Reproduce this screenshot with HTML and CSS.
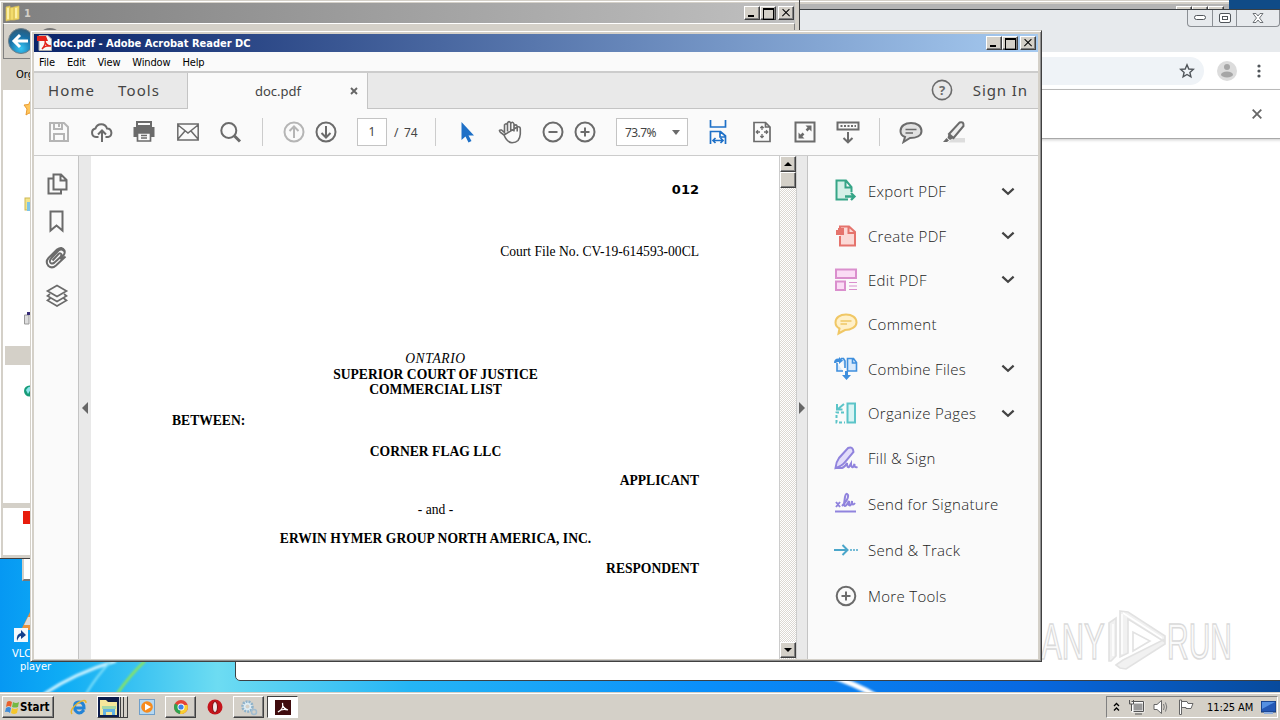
FILE: index.html
```html
<!DOCTYPE html>
<html lang="en">
<head>
  <meta charset="UTF-8"/>
  <title>doc.pdf - Adobe Acrobat Reader DC</title>
  <link rel="stylesheet" href="styles.css">
</head>
<body>
<div class="desktop">

  <!-- wallpaper -->
  <svg class="wallpaper" viewBox="0 0 1280 720">
    <defs>
      <linearGradient id="sky"><stop offset="0" stop-color="#0698f3"/><stop offset=".05" stop-color="#0fadf5"/><stop offset=".1" stop-color="#35c0f2"/><stop offset=".17" stop-color="#6ddcf2"/><stop offset=".32" stop-color="#25b5f5"/><stop offset=".55" stop-color="#0a8ffa"/><stop offset=".8" stop-color="#0869e2"/><stop offset="1" stop-color="#084a9c"/></linearGradient>
      <filter id="soft"><feGaussianBlur stdDeviation="0.8"/></filter>
    </defs>
    <rect width="1280" height="720" fill="url(#sky)"/>
    <rect x="1200" width="80" height="20" fill="#104b87"/>
    <g fill="none" filter="url(#soft)">
      <path d="M44 694Q75 673 116 661" stroke="#c9f2ff" stroke-width="3"/>
      <path d="M86 694Q96 677 111 661" stroke="#7fe0fa" stroke-width="2"/>
      <path d="M117 694Q130 675 145 661" stroke="#8be65d" stroke-width="2.5"/>
      <path d="M828 675Q856 684 876 696" stroke="#fff" stroke-width="5"/>
    </g>
  </svg>
  <div class="shortcut">
    <svg width="22" height="42" viewBox="0 0 22 42"><path d="M18 4L9 22H22V4Z" fill="#e8933f"/><path d="M16 9L12 17H20V9Z" fill="#ddd"/><rect x="2" y="20" width="14" height="14" fill="#f4f8fc"/><path d="M5 33Q4 26 9 25V22L14 27 9 31V28Q7 28 5 33Z" fill="#123f8c"/></svg>
    <span>VLC media</span>
    <span>player</span>
  </div>

  <!-- windows behind -->
  <div class="back-window"><i class="cap"></i><i class="cap"></i><i class="cap"></i></div>
  <div class="stub-window"></div>

  <div class="chrome">
    <div class="chrome-top">
      <div class="chrome-caps">
        <span><svg width="12" height="6"><rect x=".5" y=".5" width="11" height="4" rx="2" fill="#fff" stroke="#50555a"/></svg></span>
        <span><svg width="12" height="11"><rect x=".5" y=".5" width="11" height="9" rx="1.5" fill="#fff" stroke="#50555a"/><rect x="3.5" y="3.5" width="5" height="3" fill="#fff" stroke="#50555a"/></svg></span>
        <span><svg width="12" height="11"><path d="M1 .5H4L6 3 8 .5H11L7.5 5 11 9.500H8L6 7 4 9.500H1L4.500 5Z" fill="#fff" stroke="#50555a" stroke-width=".8"/></svg></span>
      </div>
    </div>
    <div class="chrome-bar">
      <div class="omnibox"><svg width="16" height="16" viewBox="0 0 16 16"><path d="M8 1.800L9.800 6 14.300 6.400 10.900 9.400 11.900 13.800 8 11.500 4.100 13.800 5.100 9.400 1.700 6.400 6.200 6Z" fill="none" stroke="#50555a" stroke-width="1.400"/></svg></div>
      <svg class="avatar" width="20" height="20" viewBox="0 0 20 20"><circle cx="10" cy="10" r="10" fill="#dcdcdc"/><circle cx="10" cy="6" r="3" fill="#a6a6a6"/><ellipse cx="10" cy="13.500" rx="6" ry="3" fill="#a6a6a6"/></svg>
      <svg width="4" height="14"><circle cx="2" cy="2" r="1.600" fill="#50555a"/><circle cx="2" cy="7" r="1.600" fill="#50555a"/><circle cx="2" cy="12" r="1.600" fill="#50555a"/></svg>
    </div>
    <div class="infobar"><svg width="10" height="10"><path d="M.7.7L9.300 9.300M9.300.7L.7 9.300" stroke="#666" stroke-width="1.800"/></svg></div>
  </div>

  <div class="explorer">
    <div class="explorer-title">
      <svg width="16" height="17"><path d="M1 2L5 1V15L1 16ZM5 3L9 2V15H5ZM9 2L14 1V14L9 15Z" fill="#f2dc6c" stroke="#d9bd55" stroke-width=".7"/><path d="M3 3V14M11 3V13" stroke="#fff5b8" stroke-width="1.500"/></svg>
      <span>1</span>
      <div class="caps"><i class="cap min"></i><i class="cap max"></i><i class="cap close"></i></div>
    </div>
    <div class="explorer-nav">
      <svg width="60" height="32" viewBox="0 0 60 32"><defs><radialGradient id="orb" cx=".5" cy=".8" r=".8"><stop offset="0" stop-color="#36c6f5"/><stop offset=".6" stop-color="#176ea5"/><stop offset="1" stop-color="#305c78"/></radialGradient></defs><circle cx="46" cy="17" r="13" fill="#777"/><circle cx="17" cy="17" r="12.500" fill="url(#orb)" stroke="#6d7f8a"/><path d="M24 17H11M16 11L10 17 16 23" fill="none" stroke="#fff" stroke-width="3"/></svg>
    </div>
    <div class="explorer-tools">Organize</div>
    <div class="explorer-pane">
      <svg width="30" height="415" viewBox="0 0 30 415">
        <path d="M21 15L25.500 14.500 28 10 30 24 26 23 23 25 24 19Z" fill="#ffc65c" stroke="#e99a2f"/>
        <rect x="22" y="108" width="12" height="12" fill="#f3e48a" stroke="#cdb754"/><rect x="24" y="112" width="9" height="9" fill="#7fc5e6"/>
        <path d="M21.500 225H26V234H21.500Z" fill="#ddd" stroke="#999"/><path d="M24 222H30V229H27V225H24Z" fill="#362d77"/>
        <rect x="2" y="256" width="28" height="19" fill="#d4d0c8"/>
        <circle cx="26.500" cy="301" r="5.500" fill="#179c78"/><path d="M23 300Q27 294 28 299L25 304Z" fill="#8ee5ec"/>
      </svg>
    </div>
    <div class="explorer-details"><i></i></div>
  </div>

  <!-- watermark -->
  <svg class="watermark" width="230" height="70" viewBox="0 0 230 70">
    <g fill="#fafafa" stroke="#dadada" stroke-width="1.600">
      <text transform="translate(1 51) scale(.62 1)" font-size="50">ANY</text>
      <text transform="translate(127 51) scale(.6 1)" font-size="50">RUN</text>
      <path d="M69 15L76 10V48L71 53H69ZM80 3L88 4 125 28V34L88 11V45L80 49ZM76 57L83 52 125 31V36L86 61 80 60Z" fill="#f1f1f1" stroke="#e2e2e2"/>
      <path d="M93 24V43L110 33Z" fill="#fff" stroke="#e2e2e2"/>
    </g>
    <path d="M83 5L122 30M82 6V46M73 16V48" fill="none" stroke="#fff" stroke-width="1.500"/>
  </svg>

  <!-- Acrobat Reader -->
  <div class="reader">
    <div class="titlebar">
      <svg width="15" height="16" viewBox="0 0 15 16"><path d="M2 .5H11L14.500 4V15.500H2Z" fill="#f7f7f7" stroke="#aaa"/><path d="M0 1H9L11 6H0Z" fill="#e32219"/><path d="M5 14Q9 9 8 6Q9 11 14 11Q8 10 5 14Z" fill="none" stroke="#e32219" stroke-width="1.300"/></svg>
      <span>doc.pdf - Adobe Acrobat Reader DC</span>
      <div class="caps"><i class="cap min"></i><i class="cap max"></i><i class="cap close"></i></div>
    </div>
    <div class="menubar"><span>File</span><span>Edit</span><span>View</span><span>Window</span><span>Help</span></div>

    <div class="tabs">
      <div class="tabs-left"><span>Home</span><span>Tools</span></div>
      <div class="tab-doc"><span>doc.pdf</span><svg width="8" height="8"><path d="M1 1L7 7M7 1L1 7" stroke="#666" stroke-width="1.900"/></svg></div>
      <div class="tabs-right">
        <svg width="22" height="22" viewBox="0 0 22 22"><circle cx="11" cy="11" r="9.600" fill="none" stroke="#6b6b6b" stroke-width="1.600"/><text x="11" y="15.500" text-anchor="middle">?</text></svg>
        <span>Sign In</span>
      </div>
    </div>

    <div class="toolbar">
      <svg class="icon dim" viewBox="0 0 24 24"><path d="M3 3H17L21 7V21H3ZM7 3V9H15V3M12 4V7M7 21V14H17V21"/></svg>
      <svg class="icon" viewBox="0 0 24 24"><path d="M8.500 17H6A4.300 4.300 0 0 1 5.500 8.500 6 6 0 0 1 17 8.500 4.300 4.300 0 0 1 18 17H15.500M12 22V11M8 14.500L12 10.500 16 14.500"/></svg>
      <svg class="icon" viewBox="0 0 24 24"><path d="M4 6V2H18V6Z" fill="#fafafa"/><path d="M.500 7H21.500V17H18V13H4V17H.500Z" fill="#6b6b6b" stroke="none"/><path d="M4.500 13H17.500V21H4.500ZM8 15.500H14M8 18H14" stroke-width="1.700"/></svg>
      <svg class="icon" viewBox="0 0 24 24"><path d="M1.800 4H22.200V20H1.800ZM2 5L12 13 22 5M2 19L9 11M22 19L15 11" stroke-width="1.500"/></svg>
      <svg class="icon" viewBox="0 0 24 24"><circle cx="9.800" cy="10.500" r="7.500"/><path d="M15.500 16L21 21.500" stroke-width="3"/></svg>
      <i class="sep"></i>
      <div class="pair">
        <svg class="icon dim" viewBox="0 0 24 24"><circle cx="12" cy="12" r="9.500"/><path d="M12 18V7M7.500 11L12 6.500 16.500 11"/></svg>
        <svg class="icon" viewBox="0 0 24 24"><circle cx="12" cy="12" r="9.500"/><path d="M12 6V17M7.500 13L12 17.500 16.500 13"/></svg>
      </div>
      <div class="pages"><b>1</b><span>/&nbsp; 74</span></div>
      <i class="sep"></i>
      <svg class="icon" viewBox="0 0 24 24"><path d="M6.500 2V20L10.500 16.500 13.500 22.500 16.500 21 13.500 15.500H19Z" fill="#1e70c7" stroke="none"/></svg>
      <svg class="icon" viewBox="0 0 24 24"><path stroke-width="1.600" d="M6 15L2.500 12.500Q0 9.500 3.500 10L6.500 12.500V5Q8 2.500 9.500 5V11.500M9.500 5V3Q11 .2 12.700 3V11.500M12.700 3.500Q14.500 .7 16 4V11.500M16 6Q18.500 3.500 19.200 6.500V11.500M19.200 7Q22.500 6 22.300 9.500V14Q22 18 20 20.500 18 22.500 14 22.700 9 22.500 6 15Z"/></svg>
      <div class="pair">
        <svg class="icon" viewBox="0 0 24 24"><circle cx="12" cy="12" r="9.500"/><path d="M7.500 12H16.500"/></svg>
        <svg class="icon" viewBox="0 0 24 24"><circle cx="12" cy="12" r="9.500"/><path d="M7.500 12H16.500M12 7.500V16.500"/></svg>
      </div>
      <div class="zoom"><span>73.7%</span><i></i></div>
      <svg class="icon blue" viewBox="0 0 24 24"><path d="M3.500 0V7H18.500V0M3.500 24V11.500H13.500L18.500 16V24M13 12V17H18M6 20.500H16M8.500 18L6 20.500 8.500 23M13.500 18L16 20.500 13.500 23" stroke-width="1.700"/></svg>
      <svg class="icon" viewBox="0 0 24 24"><path d="M4 2.500H15.500L20 7V21.500H4ZM15.500 3V7H20" stroke-width="1.700"/><path d="M12 6.500V10M12 14V17.500M6.500 12H10M14 12H17.500M10.300 8L12 6.300 13.700 8M10.300 16L12 17.700 13.700 16M8 10.300L6.300 12 8 13.700M16 10.300L17.700 12 16 13.700" stroke-width="1.300"/></svg>
      <svg class="icon" viewBox="0 0 24 24"><rect x="2.500" y="2.500" width="19" height="19"/><path d="M13.500 10.500L17 7M10.500 13.500L7 17" stroke-width="2.500"/><path d="M12.500 5.500H18.500V11.500ZM5.500 12.500V18.500H11.500Z" fill="#6b6b6b" stroke="none"/></svg>
      <svg class="icon" viewBox="0 0 24 24"><rect x="1.500" y="2.500" width="21" height="7"/><path d="M4.500 6H20" stroke-dasharray="2 1.500"/><path d="M12 12V22M7.500 18L12 22.300 16.500 18"/></svg>
      <i class="sep"></i>
      <svg class="icon" viewBox="0 0 24 24"><path d="M12 3C18 3 22.500 6 22.500 11 22.500 16 17 18 11 18L4.500 22 6 17C3 16 1.500 14 1.500 11 1.500 6 6 3 12 3Z" fill="#e2e2e2"/><path d="M6.500 9.500H17.500M6.500 13H14" stroke-width="1.500"/></svg>
      <svg class="icon" viewBox="0 0 24 24"><path d="M11 18H23V22.500H6Z" fill="#ddd" stroke="none"/><path d="M7 14L17.500 2.500Q22 1 21.500 6L11.500 18Z" fill="#eee"/><path d="M6.500 14L11.500 18 8 20 5.500 18ZM4.500 18L7 20.500 5 22H1Z" fill="#6b6b6b" stroke="none"/></svg>
    </div>

    <div class="workspace">
      <div class="rail">
        <svg class="icon" viewBox="0 0 24 24"><path d="M8.500 2.500H16L21.500 8V17.500H8.500ZM15.500 3V8.500H21M8 6.500H3.500V21.500H16V18"/></svg>
        <svg class="icon" viewBox="0 0 24 24"><path d="M5.500 2.500H17.500V21.500L11.500 16.500 5.500 21.500Z"/></svg>
        <svg class="icon" viewBox="0 0 24 24"><path d="M7.500 14.500L13.500 8Q15.500 6.500 16.500 8.500 16.500 10 15 11.500L9 17Q6 18.500 5 16 4.500 14 6.500 12L13.500 4.500Q16.500 2 19 5M20.500 10.500L11 19.500Q7 23 3.500 20 0 16 3.500 12L12 3.500Q17 0 19.500 4.500 20.500 7.500 17.500 10.500L15 13"/></svg>
        <svg class="icon" viewBox="0 0 24 24"><path d="M12 1.500L21.500 7 12 12.500 2.500 7ZM5 10L2.500 12 12 17.500 21.500 12 19 10M5 14.500L2.500 16.500 12 22 21.500 16.500 19 14.500" stroke-width="1.700"/></svg>
      </div>
      <div class="collapse left"><i></i></div>
      <div class="page">
        <p class="stamp">012</p>
        <p class="file-no">Court File No. CV-19-614593-00CL</p>
        <p class="court"><em>ONTARIO</em><br>SUPERIOR COURT OF JUSTICE<br>COMMERCIAL LIST</p>
        <p class="between">BETWEEN:</p>
        <p class="party">CORNER FLAG LLC</p>
        <p class="role">APPLICANT</p>
        <p class="and">- and -</p>
        <p class="party">ERWIN HYMER GROUP NORTH AMERICA, INC.</p>
        <p class="role">RESPONDENT</p>
      </div>
      <div class="scrollbar"><i class="btn up"></i><i class="btn thumb"></i><i class="btn down"></i></div>
      <div class="collapse right"><i></i></div>

      <div class="panel">
        <div class="tool export">
          <svg class="icon" viewBox="0 0 24 24"><path d="M14 20.500H2.500V1.500H12L17.500 8V13M11.500 2V8.500H17" fill="#d5f0e7"/><path d="M11 17.500H20M17 14L20.500 17.500 17 21" stroke-width="2.300"/></svg>
          <span>Export PDF</span><svg class="chev" viewBox="0 0 12 8"><path d="M1 1.500L6 6 11 1.500"/></svg>
        </div>
        <div class="tool create">
          <svg class="icon" viewBox="0 0 24 24"><path d="M6 12V21.500H21V8L15 2.500H6V5M14.500 3V9H20" fill="#fbd9d6"/><path d="M2 6H4V4H10V11H2Z" fill="#e5736c" stroke="none"/></svg>
          <span>Create PDF</span><svg class="chev" viewBox="0 0 12 8"><path d="M1 1.500L6 6 11 1.500"/></svg>
        </div>
        <div class="tool edit">
          <svg class="icon" viewBox="0 0 24 24"><path d="M2 1.500H22V10H2ZM2 13.500H11V22H2Z" fill="#fbdcf5"/><path d="M15 14.500H23M15 18H23M15 21.500H23" stroke-width="1.200"/></svg>
          <span>Edit PDF</span><svg class="chev" viewBox="0 0 12 8"><path d="M1 1.500L6 6 11 1.500"/></svg>
        </div>
        <div class="tool comment">
          <svg class="icon" viewBox="0 0 24 24"><path d="M12 2.500C18 2.500 22.500 5.500 22.500 10.500 22.500 15 17 18 11 18L4.500 21.500 5.500 16.500C2.500 15 1.500 13 1.500 10.500 1.500 5.500 6 2.500 12 2.500Z" fill="#fff0c8"/><path d="M6.500 9H17.500M6.500 12H13" stroke-width="1.300"/></svg>
          <span>Comment</span>
        </div>
        <div class="tool combine">
          <svg class="icon" viewBox="0 0 24 24"><path d="M9 14H3V6M7 1.500H9.500L11 4V11M14 14H22.500V5.500L19.500 1.500H13.500V14M18.500 2V6H22" fill="#d8eafc"/><path d="M0 6Q0 1 5 1.500V0L9 3.500 5 7V5Q3 4.500 2 6Z" fill="#3f8fdd" stroke="none"/><path d="M11 14H14V18H17L12.500 23 8 18H11Z" fill="#3f8fdd" stroke="none"/></svg>
          <span>Combine Files</span><svg class="chev" viewBox="0 0 12 8"><path d="M1 1.500L6 6 11 1.500"/></svg>
        </div>
        <div class="tool organize">
          <svg class="icon" viewBox="0 0 24 24"><path d="M13.500 2.500H21V21.500H13.500Z" fill="#d9f4f4"/><path d="M10 11.500H2.500V21.500H11" stroke-dasharray="3 2"/><path d="M10 3L4 8M3 3V8.500H8.500"/></svg>
          <span>Organize Pages</span><svg class="chev" viewBox="0 0 12 8"><path d="M1 1.500L6 6 11 1.500"/></svg>
        </div>
        <div class="tool sign tall">
          <svg class="icon" viewBox="0 0 24 24"><path d="M1.500 22Q2 16 5 12L14 2Q19 0 19.500 6L11 16Q8 20 1.500 22Z" fill="#e2dcfa"/><path d="M1.500 22H8Q11 21 13 17Q13 22 15 21L17 17.500Q17 22 19 21L20.500 18Q20 22 23.500 21"/></svg>
          <span>Fill &amp; Sign</span>
        </div>
        <div class="tool sign tall">
          <svg class="icon" viewBox="0 0 24 24"><path d="M2 10L6 15M6 10L2 15M1 19.500H22M8 14Q15 7 14 3 12 0 11 5L10 12Q11 17 15 9L15 13Q17 15 18 9Q18 15 21 11"/></svg>
          <span>Send for Signature</span>
        </div>
        <div class="tool track tall">
          <svg class="icon" viewBox="0 0 24 24"><path d="M0 12H13M8.500 7L13.500 12 8.500 17"/><path d="M16 12H24" stroke-dasharray="2 1" stroke-width="1.300"/></svg>
          <span>Send &amp; Track</span>
        </div>
        <div class="tool tall">
          <svg class="icon" viewBox="0 0 24 24"><circle cx="12" cy="12" r="9.300"/><path d="M7.500 12H16.500M12 7.500V16.500"/></svg>
          <span>More Tools</span>
        </div>
      </div>
    </div>
  </div>

  <div class="taskbar">
    <div class="start">
      <svg width="15" height="15" viewBox="0 0 15 15"><path d="M2 2Q4 0 7 2L6 7Q4 5 1 7Z" fill="#e9602b"/><path d="M8 2Q11 4 14 2L13 7Q10 8 7 7Z" fill="#74b843"/><path d="M1 8Q4 6 6 8L5 13Q3 11 0 12Z" fill="#3e8bd8"/><path d="M7 8Q10 10 13 8L12 13Q9 15 6 13Z" fill="#f5c62c"/></svg>
      <span>Start</span>
    </div>
    <div class="apps">
      <div class="app"><svg width="18" height="18" viewBox="0 0 18 18"><path d="M14 12Q9 18 5 12 3 4 9 4 14 4 14 10H6" fill="none" stroke="#2383d6" stroke-width="3"/><path d="M2 16Q-1 12 8 5 16 0 16 5" fill="none" stroke="#e9b52c" stroke-width="1.500"/></svg></div>
      <div class="app dark"><svg width="18" height="18" viewBox="0 0 18 18"><path d="M0 2H6L8 4H17V17H0Z" fill="#f5e79b"/><path d="M2 8H16V11H2Z" fill="#a7d8a6"/><path d="M3 17V11H15V17H12V14H6V17Z" fill="#62b2e4"/></svg></div>
      <div class="app"><svg width="16" height="16"><rect x=".5" y=".5" width="15" height="15" fill="#b5d8f2" stroke="#6f9fca"/><circle cx="8" cy="8" r="5.800" fill="#f68b1e"/><path d="M6 4.500L12 8 6 11.500Z" fill="#fff"/></svg></div>
      <div class="app raised"><svg width="16" height="16" viewBox="0 0 16 16"><circle cx="8" cy="8" r="7" fill="#e44436"/><path d="M8 8L2 4.500A7 7 0 0 0 7 15Z" fill="#2ea44f"/><path d="M8 8L7 15A7 7 0 0 0 14.500 6H8Z" fill="#f8cf30"/><circle cx="8" cy="8" r="3.500" fill="#fff"/><circle cx="8" cy="8" r="2.600" fill="#3e83e8"/></svg></div>
      <div class="app"><svg width="16" height="16"><circle cx="8" cy="8" r="7.500" fill="#c5141b"/><ellipse cx="8" cy="8" rx="2.500" ry="5.500" fill="#f1e8e8" stroke="#7e0f13"/></svg></div>
      <div class="app raised"><svg width="18" height="17" viewBox="0 0 18 17"><circle cx="7.500" cy="7.500" r="5" fill="#dcecf5" stroke="#8fb2ca" stroke-width="2.500" stroke-dasharray="2 1"/><circle cx="7.500" cy="7.500" r="2" fill="#d4d0c8"/><circle cx="14" cy="13" r="2.500" fill="none" stroke="#a2bdd0" stroke-width="1.500"/></svg></div>
      <div class="app active"><svg width="16" height="15"><rect width="16" height="15" fill="#3f0b0d"/><path d="M3 12Q9 9 7.500 3Q7 8 13 10Q7 8 3 12Z" fill="none" stroke="#fff" stroke-width="1.200"/></svg></div>
    </div>
    <div class="tray">
      <svg width="7" height="10"><path d="M1 4L3.500 1.500 6 4M1 8.500L3.500 6 6 8.500" fill="none" stroke="#000" stroke-width="1.300"/></svg>
      <svg class="net" width="17" height="16" viewBox="0 0 17 16"><path d="M4.500 3.500H15.500V12.500H4.500Z" fill="#999" stroke="#fff" stroke-width="2"/><path d="M3.500 2.500H15.500V12.500H5.500M7 15H14M1.500 1V5H5.500V1M3.500 5V12" fill="none" stroke="#555"/></svg>
      <svg width="17" height="16" viewBox="0 0 17 16"><path d="M1 5.500H4L8.500 1.500V14.500L4 10.500H1Z" fill="#fff" stroke="#666"/><path d="M10.500 5Q12 8 10.500 11M12.500 3.500Q15 8 12.500 12.500" fill="none" stroke="#777"/></svg>
      <svg width="17" height="16" viewBox="0 0 17 16"><path d="M1.500 1H3.500V15.500H1.500ZM3.500 2.500H9L10 4.500H15L13 9.500H8V8.500H3.500Z" fill="#fff" stroke="#666"/></svg>
      <span>11:25 AM</span>
      <svg width="15" height="13"><rect width="15" height="11" fill="#2458b5" stroke="#123672"/><path d="M1 1H14L1 8Z" fill="#5590e2"/><rect x="3" y="11" width="9" height="2" fill="#8cadde"/></svg>
    </div>
  </div>
</div>
</body>
</html>
```
FILE: styles.css
```css
* {
  margin: 0;
  padding: 0;
  box-sizing: border-box;
}

body {
  width: 1280px;
  height: 720px;
  overflow: hidden;
  font-family: "DejaVu Sans Condensed", "DejaVu Sans", sans-serif;
  font-size: 11px;
}

svg {
  display: block;
  flex-shrink: 0;
}

.desktop {
  position: relative;
  width: 1280px;
  height: 720px;
  overflow: hidden;
}

.wallpaper {
  position: absolute;
  inset: 0;
}

.shortcut {
  position: absolute;
  left: 12px;
  top: 608px;
  width: 60px;
  color: #fff;
  line-height: 13px;
}

.shortcut svg {
  margin-bottom: -3px;
}

.shortcut span {
  display: block;
  white-space: nowrap;
}

.shortcut span:last-child {
  padding-left: 8px;
}

/* classic caption buttons */
.caps {
  display: flex;
  margin-left: auto;
}

.cap {
  position: relative;
  width: 16px;
  height: 14px;
  background: #d4d0c8;
  border: 1px solid;
  border-color: #fff #404040 #404040 #fff;
  box-shadow: inset -1px -1px #808080;
}

.cap.close {
  margin-left: 2px;
}

.cap.min::after {
  content: "";
  position: absolute;
  left: 3px;
  bottom: 2px;
  width: 6px;
  height: 2px;
  background: #000;
}

.cap.max::after {
  content: "";
  position: absolute;
  left: 2px;
  top: 1px;
  width: 9px;
  height: 9px;
  border: 1px solid #000;
  border-top-width: 2px;
}

.cap.close::before,
.cap.close::after {
  content: "";
  position: absolute;
  left: 2px;
  top: 5px;
  width: 10px;
  height: 1.4px;
  background: #000;
  transform: rotate(45deg);
}

.cap.close::after {
  transform: rotate(-45deg);
}

/* windows behind */
.back-window {
  position: absolute;
  left: 780px;
  top: 0;
  width: 449px;
  height: 10px;
  display: flex;
  justify-content: flex-end;
  padding: 6px 5px 0;
  background: linear-gradient(#d4d0c8 0 1px, #fff 1px 2px, #d4d0c8 2px 4px, #b4b4b4 4px);
}

.stub-window {
  position: absolute;
  left: 22px;
  top: 540px;
  width: 40px;
  height: 41px;
  background: #fff;
  border: 2px solid #d4d0c8;
  border-bottom-color: #777;
}

.chrome {
  position: absolute;
  left: 235px;
  top: 9px;
  width: 1060px;
  height: 672px;
  background: #fff;
  border: 1px solid #3c4043;
  border-radius: 0 0 5px 5px;
}

.chrome-top {
  height: 42px;
  padding-right: 14px;
  background: #e7eaed;
  display: flex;
  justify-content: flex-end;
}

.chrome-caps {
  display: flex;
  width: 93px;
  height: 17px;
  border: 1px solid #8b8f94;
  border-top: 0;
  border-radius: 0 0 4px 4px;
}

.chrome-caps span {
  display: flex;
  align-items: center;
  justify-content: center;
  width: 25px;
  border-right: 1px solid #8b8f94;
}

.chrome-caps span:last-child {
  width: 42px;
  border: 0;
}

.chrome-bar {
  display: flex;
  align-items: center;
  height: 38px;
  padding-left: 80px;
  border-bottom: 1px solid #b5b5b5;
}

.omnibox {
  display: flex;
  align-items: center;
  justify-content: flex-end;
  width: 888px;
  height: 28px;
  padding-right: 9px;
  border-radius: 14px;
  background: #eff3f7;
}

.avatar {
  margin: 0 20px 0 13px;
}

.infobar {
  height: 49px;
  display: flex;
  align-items: center;
  justify-content: flex-end;
  padding-right: 32px;
  border-bottom: 1px solid #a8a8a8;
  box-shadow: 0 1px 3px #ccc;
}

/* explorer */
.explorer {
  position: absolute;
  left: 0;
  top: 0;
  width: 800px;
  height: 559px;
  padding: 3px 4px 3px 3px;
  background: #d4d0c8;
  border-right: 1px solid #404040;
  border-bottom: 1px solid #404040;
  box-shadow: inset 0 1px #d4d0c8, inset 1px 2px #fff;
}

.explorer-title {
  display: flex;
  align-items: center;
  height: 20px;
  padding: 0 1px 0 2px;
  background: linear-gradient(90deg, #808080, #c0c0c0);
  color: #d4d0c8;
  font-weight: bold;
}

.explorer-title span {
  margin-left: 3px;
}

.explorer-nav {
  height: 36px;
  border: 1px solid #808080;
  border-top-color: #fff;
}

.explorer-tools {
  height: 31px;
  padding: 9px 0 0 13px;
  background: #d4d0c8;
}

.explorer-pane {
  height: 413px;
  background: #fff;
  overflow: hidden;
}

.explorer-details {
  height: 52px;
  padding: 3px 0 0 20px;
  border-top: 5px solid #d4d0c8;
  background: #fff;
}

.explorer-details i {
  display: block;
  width: 12px;
  height: 13px;
  background: #e81c0c;
}

.watermark {
  position: absolute;
  left: 1040px;
  top: 608px;
  font-family: "Liberation Sans", sans-serif;
}

/* reader window */
.reader {
  position: absolute;
  left: 30px;
  top: 30px;
  width: 1012px;
  height: 632px;
  padding: 3px 3px 2px;
  display: flex;
  flex-direction: column;
  background: #d4d0c8;
  border: 1px solid;
  border-color: #d4d0c8 #404040 #404040 #d4d0c8;
  box-shadow: inset 1px 1px #fff, inset -1px -1px #909090;
}

.titlebar {
  display: flex;
  align-items: center;
  height: 18px;
  padding: 0 2px 0 3px;
  background: linear-gradient(90deg, #0a246a, #a6caf0);
  color: #fff;
  font-weight: bold;
}

.titlebar span {
  margin-left: 1px;
}

.menubar {
  display: flex;
  align-items: center;
  gap: 12px;
  height: 19px;
  padding: 1px 0 0 5px;
  background: #fafafa;
  letter-spacing: -.15px;
}

.tabs {
  display: flex;
  height: 38px;
  border-top: 2px solid #ccc;
  background: #e9e9e9;
  font-family: "Noto Sans", sans-serif;
  font-size: 15px;
  color: #444;
}

.tabs-left {
  display: flex;
  align-items: center;
  gap: 23px;
  width: 154px;
  padding: 0 0 2px 14px;
  border-right: 1px solid #c4c4c4;
  border-bottom: 1px solid #c4c4c4;
  letter-spacing: 1.1px;
}

.tab-doc {
  display: flex;
  align-items: center;
  width: 179px;
  padding-left: 67px;
  background: #fafafa;
  font-size: 13px;
}

.tab-doc svg {
  margin: 0 9px 0 auto;
}

.tabs-right {
  flex: 1;
  display: flex;
  align-items: center;
  justify-content: flex-end;
  gap: 20px;
  padding: 0 10px 1px 0;
  border-left: 1px solid #c4c4c4;
  border-bottom: 1px solid #c4c4c4;
  letter-spacing: .9px;
}

.tabs-right text {
  font-size: 13px;
  font-weight: bold;
  letter-spacing: 0;
  fill: #6b6b6b;
}

.icon {
  width: 24px;
  height: 24px;
  fill: none;
  stroke: #6b6b6b;
  stroke-width: 2;
}

.icon.dim {
  stroke: #b5b5b5;
}

.icon.blue {
  stroke: #1e70c7;
}

.toolbar {
  display: flex;
  align-items: center;
  gap: 19px;
  height: 47px;
  padding-left: 13px;
  background: #fafafa;
  border-bottom: 1px solid #ccc;
  font-family: "Noto Sans", sans-serif;
  font-size: 12px;
  color: #444;
}

.sep {
  width: 1px;
  height: 28px;
  background: #ccc;
}

.pair {
  display: flex;
  gap: 8px;
}

.pages {
  display: flex;
  align-items: center;
  gap: 7px;
  width: 59px;
}

.pages b {
  width: 30px;
  height: 28px;
  border: 1px solid #c4c4c4;
  background: #fff;
  font-weight: normal;
  line-height: 26px;
  text-align: center;
  flex-shrink: 0;
}

.pages span {
  white-space: nowrap;
  letter-spacing: -.2px;
}

.zoom {
  display: flex;
  align-items: center;
  justify-content: space-between;
  width: 72px;
  height: 28px;
  padding: 0 7px 0 8px;
  border: 1px solid #c4c4c4;
  background: #fff;
  letter-spacing: -.6px;
}

.zoom i {
  border: 4px solid transparent;
  border-top: 5px solid #6b6b6b;
  border-bottom: 0;
}

.workspace {
  flex: 1;
  display: flex;
  min-height: 0;
}

.rail {
  width: 45px;
  padding: 16px 0 0 11px;
  background: #fafafa;
  border-right: 1px solid #c4c4c4;
}

.rail .icon {
  margin-bottom: 13px;
}

.rail .icon:nth-child(3) {
  margin-bottom: 14px;
}

.collapse {
  display: flex;
  align-items: center;
  justify-content: center;
  width: 12px;
  background: #e9e9e9;
}

.collapse i {
  border: 6px solid transparent;
}

.collapse.left i {
  border-right: 6px solid #666;
  border-left: 0;
}

.collapse.right {
  width: 11px;
  border-right: 1px solid #c4c4c4;
}

.collapse.right i {
  border-left: 6px solid #666;
  border-right: 0;
}

.page {
  width: 688px;
  padding: 26px 80px 0 81px;
  background: #fff;
  color: #000;
  font-family: "Liberation Serif", serif;
  font-size: 13.6px;
  line-height: 16px;
}

.page p {
  white-space: nowrap;
}

.page .stamp {
  font-family: "DejaVu Sans", sans-serif;
  font-size: 13px;
  font-weight: bold;
  text-align: right;
}

.file-no {
  margin-top: 46px;
  text-align: right;
}

.court {
  margin-top: 91px;
  font-weight: bold;
  text-align: center;
  line-height: 15.7px;
}

.court em {
  font-weight: normal;
  letter-spacing: .6px;
}

.between {
  margin-top: 15px;
  font-weight: bold;
}

.party {
  margin-top: 15px;
  font-weight: bold;
  text-align: center;
}

.role {
  margin-top: 13px;
  font-weight: bold;
  text-align: right;
}

.and {
  margin-top: 13px;
  text-align: center;
}

.and + .party {
  margin-top: 13px;
}

.and + .party + .role {
  margin-top: 14px;
}

.scrollbar {
  display: flex;
  flex-direction: column;
  width: 18px;
  padding: 0 1px 1px;
  border: 1px solid #ccc;
  border-width: 0 1px;
  background: repeating-conic-gradient(#dcd8d2 0 25%, #fff 0 50%) 0 0 / 2px 2px;
}

.btn {
  display: flex;
  align-items: center;
  justify-content: center;
  width: 16px;
  height: 16px;
  margin-left: -1px;
  background: #d4d0c8;
  border: 1px solid;
  border-color: #fff #404040 #404040 #fff;
  box-shadow: inset -1px -1px #808080;
}

.btn.up::after,
.btn.down::after {
  content: "";
  border: 4px solid transparent;
  border-bottom-color: #000;
  border-top: 0;
}

.btn.down {
  margin-top: auto;
}

.btn.down::after {
  border-top: 4px solid #000;
  border-bottom: 0;
}

.panel {
  flex: 1;
  padding: 13px 23px 0 26px;
  background: #fafafa;
}

.tool {
  display: flex;
  align-items: center;
  gap: 10px;
  height: 44.4px;
  font-family: "Open Sans", sans-serif;
  font-size: 15px;
  font-weight: 300;
  letter-spacing: .3px;
  color: #222;
}

.tool.tall {
  height: 46px;
}

.chev {
  width: 14px;
  height: 9px;
  margin-left: auto;
  fill: none;
  stroke: #444;
  stroke-width: 2;
}

.export .icon { stroke: #36a587; }
.create .icon { stroke: #e5736c; }
.edit .icon { stroke: #da8fcd; }
.comment .icon { stroke: #f0c765; }
.combine .icon { stroke: #3f8fdd; stroke-width: 1.6; }
.organize .icon { stroke: #5cc4c8; }
.sign .icon { stroke: #9083dd; }
.track .icon { stroke: #4aa6ca; }

/* taskbar */
.taskbar {
  position: absolute;
  left: 0;
  bottom: 0;
  width: 1280px;
  height: 28px;
  display: flex;
  align-items: center;
  padding: 1px 2px 0;
  background: #d4d0c8;
  border-top: 1px solid #d4d0c8;
  box-shadow: inset 0 1px #fff;
}

.start {
  display: flex;
  align-items: center;
  gap: 0;
  width: 52px;
  height: 22px;
  padding-left: 2px;
  border: 1px solid;
  border-color: #fff #404040 #404040 #fff;
  box-shadow: inset -1px -1px #808080;
  font-weight: bold;
  font-size: 11.5px;
}

.apps {
  display: flex;
  gap: 3px;
  margin-left: 9px;
}

.app {
  display: flex;
  align-items: center;
  justify-content: center;
  width: 31px;
  height: 22px;
}

.app.raised {
  border: 1px solid;
  border-color: #fff #404040 #404040 #fff;
  box-shadow: inset -1px -1px #808080;
}

.app.dark {
  justify-content: flex-start;
  padding-left: 2px;
  border: 1px solid #404040;
  border-top-color: #fff;
  border-left-color: #fff;
  background: linear-gradient(90deg, #0d1d4b 0 21px, #d4d0c8 21px 22px, #404040 22px 23px, #d4d0c8 23px 25px, #404040 25px 26px, #d4d0c8 26px);
}

.app.active {
  background: #fff;
  border: 1px solid;
  border-color: #404040 #fff #fff #404040;
}

.tray {
  display: flex;
  align-items: center;
  gap: 8px;
  width: 172px;
  height: 22px;
  margin-left: auto;
  padding-left: 6px;
  border: 1px solid;
  border-color: #808080 #fff #fff #808080;
}

.tray span {
  margin-left: 4px;
  white-space: nowrap;
  letter-spacing: -.1px;
}
```
